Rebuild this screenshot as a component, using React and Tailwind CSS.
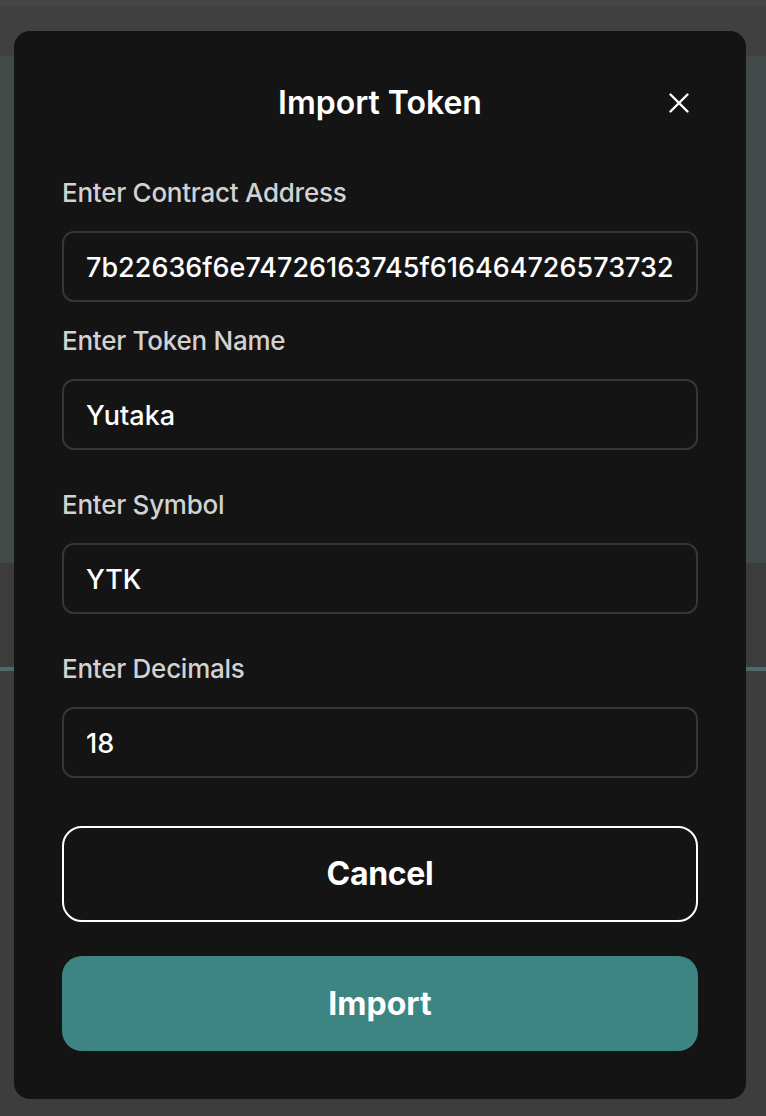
import { useState } from 'react';

const Field = ({ label, value, className = '' }) => (
    <div className={className}>
        <label className="block text-[26px] leading-[30px] font-medium tracking-[-0.01em] text-[#d2d2d2]">{label}</label>
        <div className="mt-[23px] h-[71px] rounded-xl border-2 border-[#363636] overflow-hidden flex items-center px-[22px] pt-[4px]">
            <input
                readOnly
                value={value}
                className="w-full bg-transparent outline-none text-[27px] font-medium text-white"
            />
        </div>
    </div>
);

const App = () => {
    const [open] = useState(true);

    return (
        <div className="relative h-[1116px] w-full overflow-hidden bg-[#3d3d3d]" style={{ fontFamily: 'Inter, "Noto Sans", sans-serif' }}>
            {/* page behind the overlay */}
            <div className="h-[7px] bg-[#454545]" />
            <div className="h-[49px] bg-[#404040]" />
            <div className="h-[507px] bg-[#414949]" />
            <div className="h-[104px] bg-[#3c3c3c]" />
            <div className="h-[4px] bg-[#4b6a68]" />

            {open && (
                <div className="absolute left-[14px] top-[31px] w-[732px] h-[1068px] rounded-2xl bg-[#141414] px-12 pt-[53px] flex flex-col">
                    <div className="relative text-center">
                        <h2 className="text-[32px] leading-[38px] font-semibold text-white">Import Token</h2>
                        <button className="absolute right-[9px] top-1/2 -translate-y-1/2 text-white">
                            <svg width="20" height="20" viewBox="0 0 20 20" fill="none" stroke="currentColor" strokeWidth="2.4" strokeLinecap="round">
                                <path d="M1.5 1.5 18.5 18.5" />
                                <path d="M18.5 1.5 1.5 18.5" />
                            </svg>
                        </button>
                    </div>

                    <Field className="mt-[56px]" label="Enter Contract Address" value="7b22636f6e74726163745f616464726573732" />
                    <Field className="mt-[24px]" label="Enter Token Name" value="Yutaka" />
                    <Field className="mt-[40px]" label="Enter Symbol" value="YTK" />
                    <Field className="mt-[40px]" label="Enter Decimals" value="18" />

                    <button className="mt-[48px] h-[96px] w-full rounded-[20px] border-2 border-white text-[32px] font-bold tracking-[-0.01em] text-white">
                        Cancel
                    </button>
                    <button className="mt-[34px] h-[95px] w-full rounded-[20px] bg-[#3c8582] text-[32px] font-bold text-white">
                        Import
                    </button>
                </div>
            )}
        </div>
    );
};

export default App;
